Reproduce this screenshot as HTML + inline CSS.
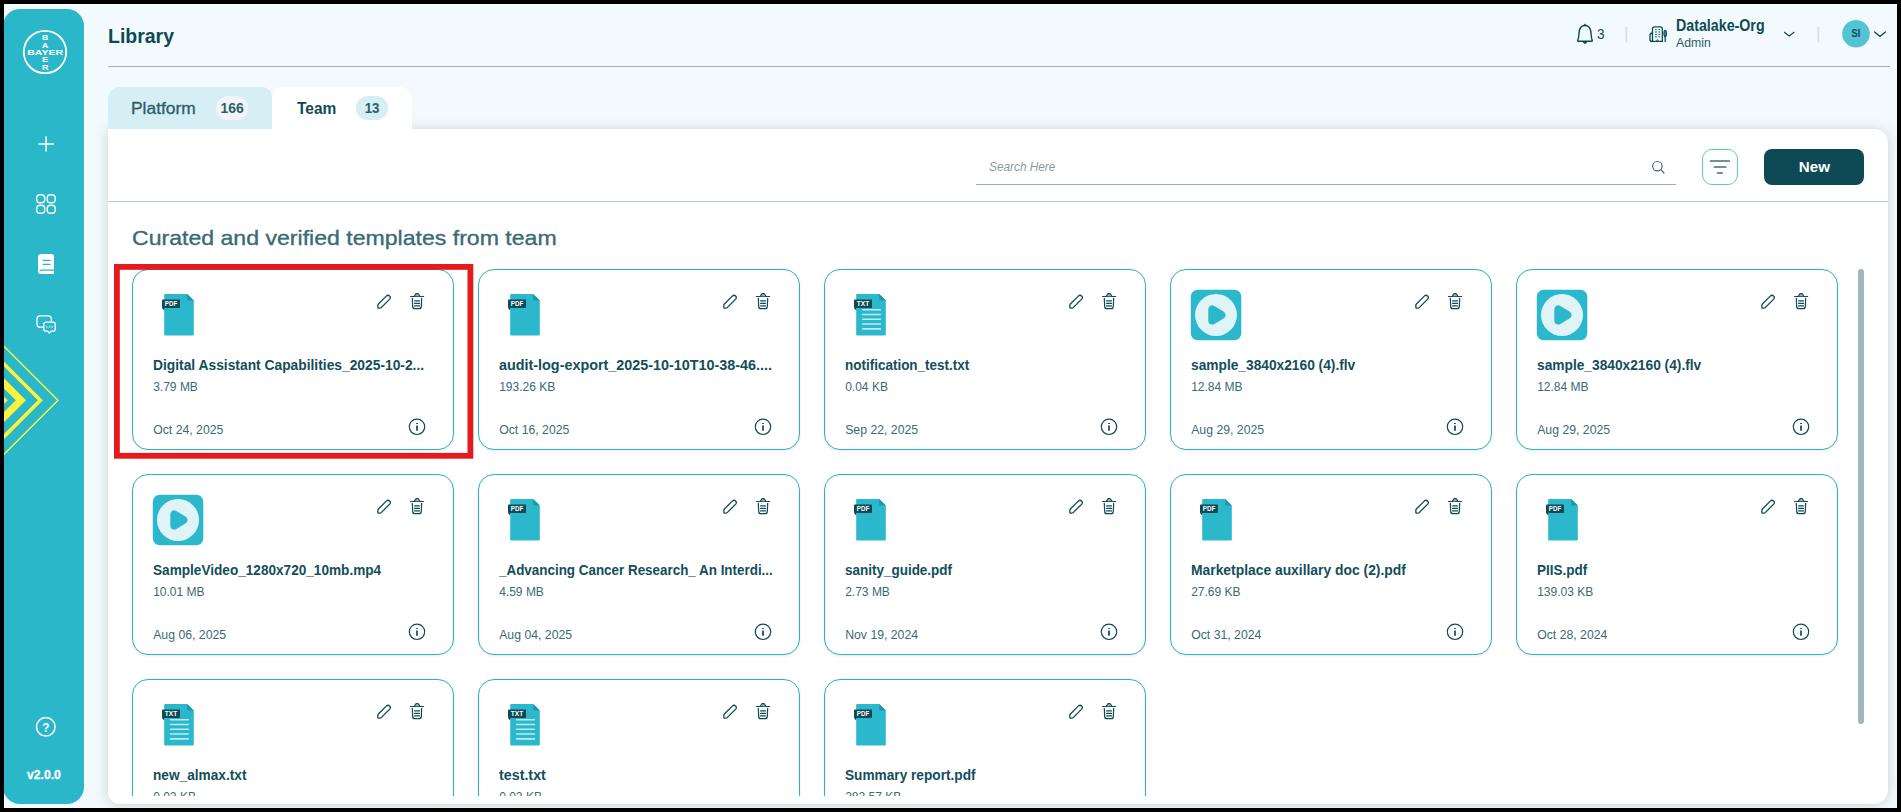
<!DOCTYPE html>
<html lang="en">
<head>
<meta charset="utf-8">
<title>Library</title>
<style>
*{box-sizing:border-box;margin:0;padding:0}
html,body{width:1901px;height:812px;overflow:hidden;background:#000}
body{font-family:"Liberation Sans",sans-serif;color:#0e4a55;position:relative}
#app{position:absolute;left:4px;top:4px;width:1893px;height:804px;overflow:hidden;background:#f3fafd}
#pg{position:absolute;left:-4px;top:-4px;width:1901px;height:812px}
#pg *{position:absolute}
#side{left:3px;top:9px;width:81px;height:795px;border-radius:17px;background:#2ab7ca;overflow:hidden}
.ttl{left:107.5px;top:23px;font-size:21px;font-weight:bold;line-height:26px;white-space:nowrap;color:#0e4a55}
.hline{left:108px;top:66px;width:1782px;height:1px;background:#a3b1b6}
.tab1{left:108px;top:87px;width:164px;height:42px;background:#d5eff4;border-radius:12px 10px 0 0}
.tab2{left:272px;top:87px;width:140px;height:42px;background:#fff;border-radius:12px 12px 0 0}
.tabt{font-size:16.5px;line-height:20px;white-space:nowrap}
.badge{width:32px;height:24px;border-radius:12px;font-size:14.5px;line-height:24px;text-align:center;font-weight:bold;color:#2f5d68}
#panel{left:108px;top:129px;width:1780px;height:675px;background:#fff;border-radius:0 14px 14px 12px;box-shadow:0 1px 13px rgba(30,60,65,.21)}
.pline{left:108px;top:201px;width:1780px;height:1px;background:#b4cad0}
.sline{left:976px;top:184px;width:700px;height:1px;background:#9fb1b6}
.ph{left:989px;top:159px;font-size:12px;line-height:16px;font-style:italic;color:#8b9a9f;white-space:nowrap}
.fbtn{left:1702px;top:149px;width:36px;height:36px;border:1px solid #5cc6d6;border-radius:10px;background:#fff}
.nbtn{left:1764px;top:149px;width:100px;height:36px;border-radius:8px;background:#0e4a55;color:#fff;font-weight:bold;font-size:15px;line-height:36px;text-align:center}
.h2{-webkit-text-stroke:0.35px #3a6a75;left:131.5px;top:225px;font-size:21px;line-height:26px;color:#3a6a75;white-space:nowrap}
#scroll{left:0;top:262px;width:1901px;height:534px;overflow:hidden}
.card{width:322px;height:181px;border:1px solid #2ab2c6;border-radius:16px;background:#fff;box-shadow:0 1px 3px rgba(0,0,0,.09)}
.card .fi{left:27px;top:23px}
.card .vi{left:19px;top:19px}
.card .pen{left:243px;top:24px}
.card .bin{left:276px;top:22px}
.card .inf{left:275px;top:148px}
.card .t{left:19.6px;top:86px;width:290px;font-size:14.5px;line-height:18px;font-weight:bold;color:#134e5a;white-space:nowrap;overflow:hidden}
.card .s{left:20.2px;top:109px;font-size:12px;line-height:16px;color:#3a6a75;white-space:nowrap}
.card .d{left:20.2px;top:152px;font-size:12.25px;line-height:16px;color:#3a6a75;white-space:nowrap}
.sbar{left:1858px;top:269px;width:6px;height:455px;border-radius:3px;background:#9eb7bb}
.red{left:114px;top:264px;width:359.3px;height:194.7px;border:5.9px solid #e41a1c}
.hd{white-space:nowrap}
.sx{position:static!important;display:inline-block;transform-origin:0 50%;white-space:nowrap}
.sx.c{transform-origin:50% 50%}
</style>
</head>
<body>
<svg width="0" height="0" style="position:absolute">
<defs>
<symbol id="i-pdf" viewBox="0 0 36 44">
<path d="M5.4 1H27.2L33.8 7.6V41.2Q33.8 42.4 32.6 42.4H5.4Q4.2 42.4 4.2 41.2V2.2Q4.2 1 5.4 1Z" fill="#2bb8cc"/>
<path d="M27.2 1L33.8 7.6H28.2Q27.2 7.6 27.2 6.6Z" fill="#1f97aa"/>
<path d="M2 15H4.2V17.6Z" fill="#0a3a44"/>
<rect x="2" y="6.6" width="18" height="8.4" rx="0.8" fill="#0e4a55"/>
<text x="11" y="13.2" font-family="Liberation Sans, sans-serif" font-size="6.6" font-weight="bold" fill="#fff" text-anchor="middle" textLength="12.4" lengthAdjust="spacingAndGlyphs">PDF</text>
</symbol>
<symbol id="i-txt" viewBox="0 0 36 44">
<path d="M5.4 1H27.2L33.8 7.6V41.2Q33.8 42.4 32.6 42.4H5.4Q4.2 42.4 4.2 41.2V2.2Q4.2 1 5.4 1Z" fill="#2bb8cc"/>
<path d="M27.2 1L33.8 7.6H28.2Q27.2 7.6 27.2 6.6Z" fill="#1f97aa"/>
<g stroke="#bfe9f0" stroke-width="1.6" stroke-linecap="round"><path d="M10.6 16.8H28.4M10.6 21.5H28.4M10.6 26.3H28.4M10.6 31H28.4M10.6 35.9H28.4"/></g>
<path d="M2 15H4.2V17.6Z" fill="#0a3a44"/>
<rect x="2" y="6.6" width="18" height="8.4" rx="0.8" fill="#0e4a55"/>
<text x="11" y="13.2" font-family="Liberation Sans, sans-serif" font-size="6.6" font-weight="bold" fill="#fff" text-anchor="middle" textLength="12.4" lengthAdjust="spacingAndGlyphs">TXT</text>
</symbol>
<symbol id="i-vid" viewBox="0 0 52 52">
<rect x="0.8" y="0.8" width="50.5" height="50.5" rx="7" fill="#2bb8cc"/>
<circle cx="26" cy="26" r="21" fill="#e0f4f8"/>
<path d="M22.3 20.4V31.6L31.4 26Z" fill="#2bb8cc" stroke="#2bb8cc" stroke-width="8" stroke-linejoin="round"/>
</symbol>
<symbol id="i-pen" viewBox="0 0 16 16">
<path d="M10.5 1.9A2.27 2.27 0 0 1 13.7 5.1L5.2 13.6Q4.66 14.15 3.9 14.15L2.6 14.15Q1.85 14.15 1.85 13.4L1.85 11.3Q1.85 10.54 2.4 10Z" fill="none" stroke="#0e4a55" stroke-width="1.3" stroke-linejoin="round"/>
</symbol>
<symbol id="i-bin" viewBox="0 0 16 18">
<g fill="none" stroke="#0e4a55" stroke-width="1.2" stroke-linecap="round" stroke-linejoin="round">
<path d="M1.5 4.5H14.6"/>
<path d="M5.3 4.3L6.6 2.2Q6.9 1.7 7.5 1.7H8.7Q9.3 1.7 9.6 2.2L10.9 4.3" fill="#9fb9be"/>
<path d="M3.3 6.3L3.7 14.6Q3.8 16.6 5.8 16.6H10.2Q12.2 16.6 12.3 14.6L12.7 6.3"/>
<path d="M5.6 8.9H10.5M5.6 11.4H10.5M5.6 13.9H10.5"/>
</g>
</symbol>
<symbol id="i-inf" viewBox="0 0 18 18">
<circle cx="9" cy="8.8" r="7.7" fill="none" stroke="#0e4a55" stroke-width="1.2"/>
<path d="M9 5.1V5.9M9 7.6V12.8" stroke="#0e4a55" stroke-width="1.7" fill="none"/>
</symbol>
</defs>
</svg>
<div id="app"><div id="pg">

<!-- sidebar -->
<div id="side">
<svg width="81" height="795" viewBox="3 9 81 795" style="left:0;top:0">
<!-- logo -->
<circle cx="45" cy="52" r="21.2" fill="none" stroke="#fff" stroke-width="1.8"/>
<g font-family="Liberation Sans, sans-serif" font-weight="bold" fill="#fff" font-size="7.2">
<text x="27.2" y="54.7" textLength="35.8" lengthAdjust="spacingAndGlyphs">BAYER</text>
<text x="42" y="40.1" font-size="7.9" textLength="6.3" lengthAdjust="spacingAndGlyphs">B</text>
<text x="41.8" y="48.1" font-size="7.9" textLength="6.6" lengthAdjust="spacingAndGlyphs">A</text>
<text x="42" y="62.4" font-size="7.9" textLength="6.3" lengthAdjust="spacingAndGlyphs">E</text>
<text x="42" y="70.1" font-size="7.9" textLength="6.5" lengthAdjust="spacingAndGlyphs">R</text>
</g>
<!-- plus -->
<path d="M38.4 144H53.8M46.1 136.3V151.6" stroke="#fff" stroke-width="1.5" fill="none"/>
<!-- grid -->
<g fill="none" stroke="#fff" stroke-width="1.4">
<rect x="36.7" y="194.7" width="8" height="8" rx="3.3"/>
<rect x="47.2" y="194.7" width="8" height="8" rx="3.3"/>
<rect x="36.7" y="205.2" width="8" height="8" rx="3.3"/>
<rect x="47.2" y="205.2" width="8" height="8" rx="3.3"/>
</g>
<!-- book -->
<path d="M41 254H51.5Q54 254 54 256.5V274H41Q38 274 38 271V257Q38 254 41 254Z" fill="#fff"/>
<path d="M43.2 260.4H50M43.2 264.4H50" stroke="#2ab7ca" stroke-width="1.3" stroke-linecap="round"/>
<path d="M54 270.2H41.2Q40 270.2 40 271.2" stroke="#2ab7ca" stroke-width="1.3" fill="none"/>
<!-- chat -->
<g fill="none" stroke="#fff" stroke-width="1.3" stroke-linejoin="round">
<path d="M43 327.2H40Q37 327.2 37 324.2V318.8Q37 315.8 40 315.8H48.4Q51.4 315.8 51.4 318.8V321.5"/>
<path d="M46 322.2H53Q55.2 322.2 55.2 324.4V329Q55.2 331.2 53 331.2H51L49.3 333.2L47.6 331.2H46Q43.8 331.2 43.8 329V324.4Q43.8 322.2 46 322.2Z" fill="#2ab7ca"/>
</g>
<path d="M46.3 326.8H47.5M48.9 326.8H50.1M51.5 326.8H52.7" stroke="#fff" stroke-width="1.2"/>
<!-- chevrons -->
<g fill="none" stroke="#fff23c" stroke-linejoin="miter">
<path d="M-12 330.3L58 400.3L-12 470.3" stroke-width="1.4"/>
<path d="M-30 330L40.3 400.3L-30 470.6" stroke-width="3.6"/>
<path d="M-50 329.4L20.9 400.3L-50 471.2" stroke-width="7.2"/>
</g>
<path d="M0 392.5L7.8 400.3L0 408.1Z" fill="#fff23c"/>
<!-- help -->
<circle cx="45.8" cy="726.8" r="9.3" fill="none" stroke="#fff" stroke-width="1.5"/>
<text x="45.8" y="731.8" font-family="Liberation Sans, sans-serif" font-size="12" font-weight="bold" fill="#fff" text-anchor="middle">?</text>
<text x="44" y="778.6" font-family="Liberation Sans, sans-serif" font-size="12" font-weight="bold" fill="#fff" text-anchor="middle" textLength="33.8" lengthAdjust="spacingAndGlyphs" stroke="#fff" stroke-width="0.3">v2.0.0</text>
</svg>
</div>

<!-- header -->
<div class="ttl"><span class="sx" style="transform:scaleX(0.9275)">Library</span></div>
<div class="hline"></div>
<svg width="330" height="60" viewBox="1570 5 330 60" style="left:1570px;top:5px">
<g fill="none" stroke="#0e4a55" stroke-width="1.3" stroke-linecap="round" stroke-linejoin="round">
<!-- bell -->
<path d="M1577.8 40.1Q1577.4 41.3 1578.6 41.3H1591.4Q1592.6 41.3 1592.2 40.1C1590.8 37 1591.4 34 1590.6 30.5C1589.8 27 1587.5 25.5 1585 25.5C1582.5 25.5 1580.2 27 1579.4 30.5C1578.6 34 1579.2 37 1577.8 40.1Z" stroke-width="1.4"/>
<path d="M1585 24.6V25" stroke-width="1.6"/>
<path d="M1583.2 42H1586.8Q1586.4 43.6 1585 43.6Q1583.6 43.6 1583.2 42Z" fill="#0e4a55" stroke-width="0.6"/>
<!-- chevrons -->
<path d="M1784.4 32.3L1789.2 36L1794 32.3" stroke-width="1.1"/>
<path d="M1874.6 32L1880 36.4L1885.4 32" stroke-width="1.3"/>
<!-- building -->
<path d="M1652.5 41.4V28.8Q1652.5 26.8 1654.5 26.8H1660.3Q1662.3 26.8 1662.3 28.8V41.4"/>
<path d="M1652.5 33Q1650 33 1650 35.5V39.4Q1650 41.4 1652 41.4"/>
<path d="M1650.8 41.4H1662.3"/>
<ellipse cx="1665.2" cy="33.4" rx="1.2" ry="3.1" fill="#6c949c"/>
<path d="M1665.2 36.4V41.5"/>
<path d="M1656.6 41.2V40.2Q1657.4 39.2 1658.2 40.2V41.2" stroke-width="0.9"/>
</g>
<g fill="#2f6570">
<rect x="1655.1" y="29" width="1.7" height="1.2"/><rect x="1658.4" y="29" width="1.7" height="1.2"/>
<rect x="1655.1" y="31.4" width="1.7" height="1.2"/><rect x="1658.4" y="31.4" width="1.7" height="1.2"/>
<rect x="1655.1" y="33.8" width="1.7" height="1.2"/><rect x="1658.4" y="33.8" width="1.7" height="1.2"/>
<rect x="1655.1" y="36.2" width="1.7" height="1.2"/><rect x="1658.4" y="36.2" width="1.7" height="1.2"/>
</g>
<path d="M1626.3 27V42.6M1818.3 27V42.6" stroke="#dcdce3" stroke-width="1.7"/>
<circle cx="1856" cy="33.8" r="13.8" fill="#54c3d3"/>
</svg>
<div class="hd" style="left:1596.8px;top:23.6px;font-size:15.5px;line-height:20px"><span class="sx" style="transform:scaleX(0.8750)">3</span></div>
<div class="hd" style="left:1676px;top:16.4px;font-size:16px;line-height:20px;font-weight:bold"><span class="sx" style="transform:scaleX(0.8894)">Datalake-Org</span></div>
<div class="hd" style="left:1676.2px;top:33.8px;font-size:13px;line-height:18px;color:#2f5d68"><span class="sx" style="transform:scaleX(0.9449)">Admin</span></div>
<div class="hd" style="left:1842px;top:23.2px;width:28px;text-align:center;font-size:10.5px;line-height:20px;font-weight:bold"><span class="sx c" style="transform:scaleX(0.8897)">SI</span></div>

<!-- tabs -->
<!-- panel -->
<div id="panel"></div>
<div class="tab1"></div>
<div class="tabt" style="left:130.8px;top:98px;color:#2f5d68;-webkit-text-stroke:0.3px #2f5d68"><span class="sx" style="transform:scaleX(1.0555)">Platform</span></div>
<div class="badge" style="left:216px;top:96px;background:#f1f4fb"><span class="sx c" style="transform:scaleX(0.9574)">166</span></div>
<div class="tab2" style="box-shadow:none"></div>
<div class="tabt" style="left:296.8px;top:98px;font-weight:bold"><span class="sx" style="transform:scaleX(0.9392)">Team</span></div>
<div class="badge" style="left:356px;top:96px;background:#d5eff4"><span class="sx c" style="transform:scaleX(0.9213)">13</span></div>
<div class="ph"><span class="sx" style="transform:scaleX(0.9854)">Search Here</span></div>
<div class="sline"></div>
<svg width="16" height="16" viewBox="0 0 16 16" style="left:1650px;top:159px"><circle cx="7.4" cy="7.2" r="4.7" fill="none" stroke="#3f6d77" stroke-width="1.2"/><path d="M10.9 10.7L14 14" stroke="#3f6d77" stroke-width="1.2" stroke-linecap="round"/></svg>
<div class="fbtn"><svg width="34" height="34" viewBox="1703 150 34 34" style="left:0;top:0"><path d="M1710.4 161H1729.4M1714.2 166.9H1725.9M1717.5 173H1722.4" stroke="#3f6d77" stroke-width="1.5" stroke-linecap="round"/></svg></div>
<div class="nbtn"><span class="sx c" style="transform:scaleX(1.0108)">New</span></div>
<div class="pline"></div>
<div class="h2"><span class="sx" style="transform:scaleX(1.0991)">Curated and verified templates from team</span></div>

<div id="scroll">
<div class="card" style="left:132px;top:7px"><svg class="fi" width="36" height="44"><use href="#i-pdf"/></svg><svg class="pen" width="16" height="16"><use href="#i-pen"/></svg><svg class="bin" width="16" height="18"><use href="#i-bin"/></svg><div class="t"><span class="sx" style="transform:scaleX(0.9522)">Digital Assistant Capabilities_2025-10-2...</span></div><div class="s">3.79 MB</div><div class="d">Oct 24, 2025</div><svg class="inf" width="18" height="18"><use href="#i-inf"/></svg></div>
<div class="card" style="left:478px;top:7px"><svg class="fi" width="36" height="44"><use href="#i-pdf"/></svg><svg class="pen" width="16" height="16"><use href="#i-pen"/></svg><svg class="bin" width="16" height="18"><use href="#i-bin"/></svg><div class="t"><span class="sx" style="transform:scaleX(0.9907)">audit-log-export_2025-10-10T10-38-46....</span></div><div class="s">193.26 KB</div><div class="d">Oct 16, 2025</div><svg class="inf" width="18" height="18"><use href="#i-inf"/></svg></div>
<div class="card" style="left:824px;top:7px"><svg class="fi" width="36" height="44"><use href="#i-txt"/></svg><svg class="pen" width="16" height="16"><use href="#i-pen"/></svg><svg class="bin" width="16" height="18"><use href="#i-bin"/></svg><div class="t"><span class="sx" style="transform:scaleX(0.9291)">notification_test.txt</span></div><div class="s">0.04 KB</div><div class="d">Sep 22, 2025</div><svg class="inf" width="18" height="18"><use href="#i-inf"/></svg></div>
<div class="card" style="left:1170px;top:7px"><svg class="vi" width="52" height="52"><use href="#i-vid"/></svg><svg class="pen" width="16" height="16"><use href="#i-pen"/></svg><svg class="bin" width="16" height="18"><use href="#i-bin"/></svg><div class="t"><span class="sx" style="transform:scaleX(0.9478)">sample_3840x2160 (4).flv</span></div><div class="s">12.84 MB</div><div class="d">Aug 29, 2025</div><svg class="inf" width="18" height="18"><use href="#i-inf"/></svg></div>
<div class="card" style="left:1516px;top:7px"><svg class="vi" width="52" height="52"><use href="#i-vid"/></svg><svg class="pen" width="16" height="16"><use href="#i-pen"/></svg><svg class="bin" width="16" height="18"><use href="#i-bin"/></svg><div class="t"><span class="sx" style="transform:scaleX(0.9478)">sample_3840x2160 (4).flv</span></div><div class="s">12.84 MB</div><div class="d">Aug 29, 2025</div><svg class="inf" width="18" height="18"><use href="#i-inf"/></svg></div>
<div class="card" style="left:132px;top:212px"><svg class="vi" width="52" height="52"><use href="#i-vid"/></svg><svg class="pen" width="16" height="16"><use href="#i-pen"/></svg><svg class="bin" width="16" height="18"><use href="#i-bin"/></svg><div class="t"><span class="sx" style="transform:scaleX(0.9383)">SampleVideo_1280x720_10mb.mp4</span></div><div class="s">10.01 MB</div><div class="d">Aug 06, 2025</div><svg class="inf" width="18" height="18"><use href="#i-inf"/></svg></div>
<div class="card" style="left:478px;top:212px"><svg class="fi" width="36" height="44"><use href="#i-pdf"/></svg><svg class="pen" width="16" height="16"><use href="#i-pen"/></svg><svg class="bin" width="16" height="18"><use href="#i-bin"/></svg><div class="t"><span class="sx" style="transform:scaleX(0.9250)">_Advancing Cancer Research_ An Interdi...</span></div><div class="s">4.59 MB</div><div class="d">Aug 04, 2025</div><svg class="inf" width="18" height="18"><use href="#i-inf"/></svg></div>
<div class="card" style="left:824px;top:212px"><svg class="fi" width="36" height="44"><use href="#i-pdf"/></svg><svg class="pen" width="16" height="16"><use href="#i-pen"/></svg><svg class="bin" width="16" height="18"><use href="#i-bin"/></svg><div class="t"><span class="sx" style="transform:scaleX(0.9291)">sanity_guide.pdf</span></div><div class="s">2.73 MB</div><div class="d">Nov 19, 2024</div><svg class="inf" width="18" height="18"><use href="#i-inf"/></svg></div>
<div class="card" style="left:1170px;top:212px"><svg class="fi" width="36" height="44"><use href="#i-pdf"/></svg><svg class="pen" width="16" height="16"><use href="#i-pen"/></svg><svg class="bin" width="16" height="18"><use href="#i-bin"/></svg><div class="t"><span class="sx" style="transform:scaleX(0.9556)">Marketplace auxillary doc (2).pdf</span></div><div class="s">27.69 KB</div><div class="d">Oct 31, 2024</div><svg class="inf" width="18" height="18"><use href="#i-inf"/></svg></div>
<div class="card" style="left:1516px;top:212px"><svg class="fi" width="36" height="44"><use href="#i-pdf"/></svg><svg class="pen" width="16" height="16"><use href="#i-pen"/></svg><svg class="bin" width="16" height="18"><use href="#i-bin"/></svg><div class="t"><span class="sx" style="transform:scaleX(0.9309)">PIIS.pdf</span></div><div class="s">139.03 KB</div><div class="d">Oct 28, 2024</div><svg class="inf" width="18" height="18"><use href="#i-inf"/></svg></div>
<div class="card" style="left:132px;top:417px"><svg class="fi" width="36" height="44"><use href="#i-txt"/></svg><svg class="pen" width="16" height="16"><use href="#i-pen"/></svg><svg class="bin" width="16" height="18"><use href="#i-bin"/></svg><div class="t"><span class="sx" style="transform:scaleX(0.9426)">new_almax.txt</span></div><div class="s">0.02 KB</div><div class="d">Sep 30, 2024</div><svg class="inf" width="18" height="18"><use href="#i-inf"/></svg></div>
<div class="card" style="left:478px;top:417px"><svg class="fi" width="36" height="44"><use href="#i-txt"/></svg><svg class="pen" width="16" height="16"><use href="#i-pen"/></svg><svg class="bin" width="16" height="18"><use href="#i-bin"/></svg><div class="t"><span class="sx" style="transform:scaleX(0.9852)">test.txt</span></div><div class="s">0.02 KB</div><div class="d">Sep 30, 2024</div><svg class="inf" width="18" height="18"><use href="#i-inf"/></svg></div>
<div class="card" style="left:824px;top:417px"><svg class="fi" width="36" height="44"><use href="#i-pdf"/></svg><svg class="pen" width="16" height="16"><use href="#i-pen"/></svg><svg class="bin" width="16" height="18"><use href="#i-bin"/></svg><div class="t"><span class="sx" style="transform:scaleX(0.9420)">Summary report.pdf</span></div><div class="s">282.57 KB</div><div class="d">Sep 30, 2024</div><svg class="inf" width="18" height="18"><use href="#i-inf"/></svg></div>
</div>
<div class="sbar"></div>
<svg width="380" height="210" viewBox="105 255 380 210" style="left:105px;top:255px"><rect x="116.9" y="266.9" width="353.5" height="188.9" fill="none" stroke="#e41a1c" stroke-width="5.8"/></svg>

</div></div>
</body>
</html>
